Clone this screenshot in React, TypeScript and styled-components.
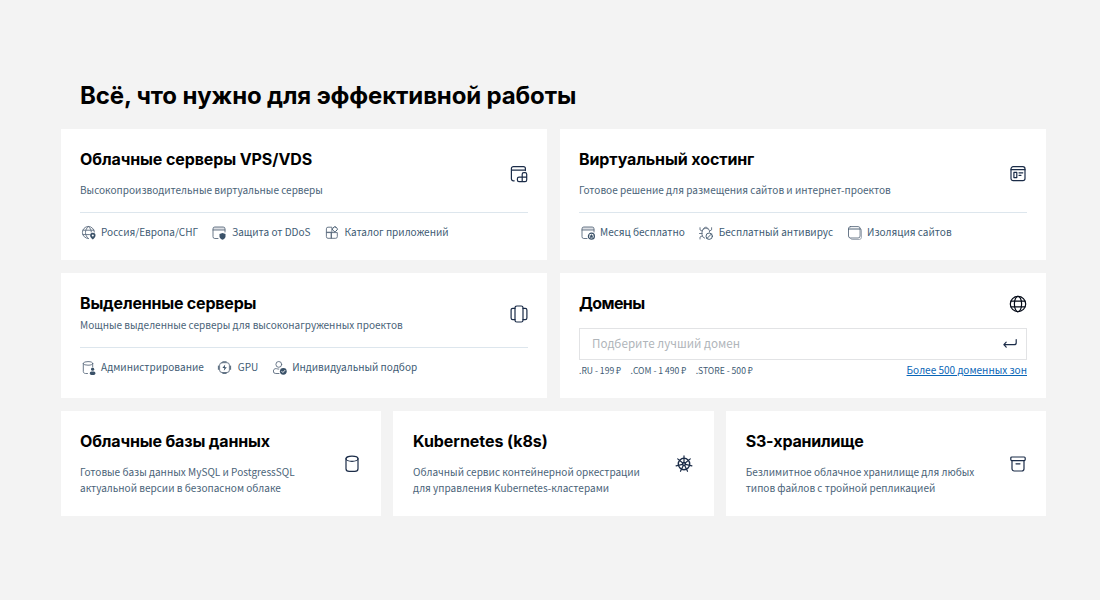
import React from 'react';
import styled, { createGlobalStyle } from 'styled-components';

const GlobalStyle = createGlobalStyle`
  * { box-sizing: border-box; }
  body { margin: 0; background: #f3f3f3; }
`;

const sans = '"Noto Sans CJK SC", "Noto Sans", sans-serif';

const Page = styled.main`
  width: 1100px;
  height: 600px;
  padding: 80px 54px 0 61px;
  background: #f3f3f3;
  font-family: ${sans};
`;
const PageTitle = styled.h2`
  margin: 0 0 17px 19px;
  font: 700 24px/32px Inter, sans-serif;
  letter-spacing: -0.14px;
  color: #000;
`;
const Grid = styled.div`
  display: flex;
  flex-direction: column;
  gap: 13px;
`;
const Row = styled.div<{ $cols: number; $height: number }>`
  display: grid;
  grid-template-columns: repeat(${p => p.$cols}, 1fr);
  gap: ${p => (p.$cols === 2 ? 13 : 12)}px;
  height: ${p => p.$height}px;
`;
const Card = styled.section<{ $inset?: number }>`
  padding: 19px 19px 0 ${p => p.$inset ?? 19}px;
  background: #fff;
`;
const Head = styled.div<{ $line?: boolean }>`
  display: flex;
  align-items: center;
  justify-content: space-between;
  padding-bottom: ${p => (p.$line ? 14 : 0)}px;
  border-bottom: ${p => (p.$line ? '1px solid #dde6ed' : 'none')};
`;
const CardTitle = styled.h3<{ $track?: number }>`
  margin: 0;
  padding-bottom: 2px;
  font: 700 16px/22px Inter, sans-serif;
  letter-spacing: ${p => p.$track ?? -0.1}px;
  color: #000;
`;
const Text = styled.p<{ $gap?: number }>`
  margin: ${p => p.$gap ?? 10}px 0 0;
  font-size: 10.04px;
  line-height: 16px;
  white-space: pre-line;
  color: #4a6378;
`;
const HeadIcon = styled.svg<{ $shift?: number; $top?: number; $color?: string }>`
  flex: none;
  width: 18px;
  height: 18px;
  margin: ${p => p.$top ?? 2}px ${p => p.$shift ?? 0}px 0 0;
  fill: none;
  stroke: ${p => p.$color ?? '#1b2c48'};
  stroke-width: 1.2;
  stroke-linecap: round;
  stroke-linejoin: round;
`;
const Features = styled.ul`
  display: flex;
  gap: 13.4px;
  margin: 11px 0 0 0.5px;
  padding: 0;
  list-style: none;
`;
const Feature = styled.li`
  display: flex;
  align-items: center;
  gap: 4.5px;
  height: 17px;
  font-size: 10.04px;
  line-height: 15px;
  color: #3d5a73;
`;
const FeatureLabel = styled.span`
  padding-bottom: 2px;
`;
const SmallIcon = styled.svg`
  width: 16px;
  height: 16px;
  fill: none;
  stroke: #5b6b7e;
  stroke-width: 0.9;
  stroke-linecap: round;
  stroke-linejoin: round;
  .solid { fill: #3a5168; stroke: none; }
  .dark { stroke: #3a5168; }
  .tint { fill: #dcdfe4; }
  .mark { stroke: #fff; }
`;
const Search = styled.div`
  display: flex;
  align-items: center;
  justify-content: space-between;
  height: 32px;
  margin-top: 12px;
  padding: 0 7px 0 12px;
  border: 1px solid #e2e3e5;
`;
const SearchInput = styled.input`
  flex: 1;
  padding: 0 0 2px;
  border: 0;
  outline: 0;
  background: none;
  font: 11.65px/20px ${sans};
  &::placeholder { color: #b0b5ba; opacity: 1; }
`;
const Below = styled.div`
  display: flex;
  align-items: center;
  justify-content: space-between;
  margin-top: 2px;
  line-height: 16px;
`;
const Prices = styled.div`
  display: flex;
  gap: 9.4px;
  font-size: 8.6px;
  color: #3d5a73;
`;
const ZonesLink = styled.a`
  font-size: 10.04px;
  color: #0a66b7;
  text-decoration: underline;
  text-underline-offset: 1px;
`;

const headIcons = {
  vps: <>
    <path d="M4.2 15.8H3.4a2 2 0 0 1-2-2V3.6a2 2 0 0 1 2-2h10a2 2 0 0 1 2 2v2M1.4 5.2h14" />
    <path d="M12.2 12.2V9.3a1.6 1.6 0 0 1 1.6-1.6h1.3a1.6 1.6 0 0 1 1.6 1.6v5.8a1.6 1.6 0 0 1-1.6 1.6H9a1.6 1.6 0 0 1-1.6-1.6v-1.3A1.6 1.6 0 0 1 9 12.2h7.7M12.2 12.2v4.5" />
  </>,
  hosting: <>
    <rect x="2" y="1.7" width="14" height="14" rx="2.2" />
    <path d="M2 4.7h14M4.9 7.4h2.9v5.2H4.9zM10 7.8h3.8M10 10.3h2" />
  </>,
  server: <>
    <rect x="5" y="1" width="8" height="16" rx="1.8" />
    <path d="M5 3.3H2.8A1.7 1.7 0 0 0 1.1 5v8a1.7 1.7 0 0 0 1.7 1.7H5M13 3.3h2.2A1.7 1.7 0 0 1 16.9 5v8a1.7 1.7 0 0 1-1.7 1.7H13" />
  </>,
  globe: <>
    <circle cx="9" cy="9" r="7.7" />
    <ellipse cx="9" cy="9" rx="3.6" ry="7.7" />
    <path d="M2 6.2h14M2 11.8h14" />
  </>,
  database: <>
    <ellipse cx="9" cy="3.7" rx="6" ry="2.6" />
    <path d="M3 3.7v10c0 1.6 1.5 2.7 3.2 2.7h5.6c1.7 0 3.2-1.1 3.2-2.7v-10" />
  </>,
  helm: <>
    <circle cx="9" cy="9" r="5.7" strokeWidth="1.4" />
    <circle cx="9" cy="9" r="1.5" strokeWidth="1.3" />
    <path d="M9 .9v6.4M9 9 9.1 9M2.7 3.9 7.8 8M15.3 3.9 10.2 8M1.1 10.8l6.3-1.4M16.9 10.8l-6.3-1.4M5.5 16.3l2.8-5.8M12.5 16.3l-2.8-5.8" />
  </>,
  archive: <>
    <rect x="1.8" y="2" width="14.4" height="3.6" rx="1" />
    <path d="M3 5.6v8.2A2.2 2.2 0 0 0 5.2 16h7.6a2.2 2.2 0 0 0 2.2-2.2V5.6M7 8.8h4" />
  </>,
};

const browser = <><path className="tint" stroke="none" d="M2 5V3.8A1.8 1.8 0 0 1 3.8 2h8.4A1.8 1.8 0 0 1 14 3.8V5z" /><path d="M7 13.5H3.8A1.8 1.8 0 0 1 2 11.7V3.8A1.8 1.8 0 0 1 3.8 2h8.4A1.8 1.8 0 0 1 14 3.8V7M2 5h12" /></>;

const smallIcons = {
  location: <>
    <path d="M7.4 13.5A6 6 0 1 1 13.4 7M7.4 1.5c-4 3-4 9 0 12M7.4 1.5c2 1.5 2.8 3.5 2.9 5.5M1.9 5.2h11M1.9 9.6h6.6" />
    <path className="solid" d="M11.8 7.7a2.7 2.7 0 0 0-2.7 2.8c0 1.7 1.6 3.2 2.7 4.1 1.1-.9 2.7-2.4 2.7-4.1a2.7 2.7 0 0 0-2.7-2.8z" />
    <circle cx="11.8" cy="10.5" r="1" fill="#fff" stroke="none" />
  </>,
  shield: <>{browser}<path className="solid" d="M11.5 8.1l3 1v2.3c0 1.5-1.5 2.6-3 3.3-1.5-.7-3-1.8-3-3.3V9.1z" /></>,
  catalog: <>
    <path d="M7.5 2.2H4A1.6 1.6 0 0 0 2.4 3.8v3.8h5.1zM2.4 7.6v4.1A1.6 1.6 0 0 0 4 13.3h3.5V7.6zM7.5 7.6h5.8v4.1a1.6 1.6 0 0 1-1.6 1.6H7.5z" />
    <rect className="dark" x="8.8" y="2.1" width="4.2" height="4.2" rx="1.2" transform="rotate(45 10.9 4.2)" />
  </>,
  month: <>{browser}<circle className="dark" cx="11.4" cy="11.2" r="3" strokeWidth="1.2" /><path className="solid" d="M11.4 9.1l.7 1.4 1.5.2-1.1 1 .3 1.5-1.4-.7-1.4.7.3-1.5-1.1-1 1.5-.2z" /></>,
  virus: <>
    <path d="M6.7 13.2A3.8 3.8 0 0 1 4 9.5V7a3.8 3.8 0 0 1 7.6 0M5.5 4.1C5.4 1.5 10.2 1.5 10.1 4.1M4 6 2 4.9V2.7M4 8.5H1.5M4.2 10.9 2 12v2M11.6 6l2-1.1V2.7" />
    <circle className="dark" cx="11.2" cy="11.2" r="3.2" /><path className="dark" d="m9 13.4 4.4-4.4" />
  </>,
  isolate: <>
    <path opacity=".6" d="M13.3 3.6c.8.2 1.2.8 1.2 1.6v7a2.3 2.3 0 0 1-2.3 2.3h-7c-.8 0-1.4-.4-1.6-1.2" />
    <rect x="1.5" y="1.6" width="11.6" height="11.4" rx="2" /><path className="dark" d="M1.5 4h11.6" />
  </>,
  admin: <>
    <ellipse cx="7" cy="3.4" rx="4.7" ry="1.8" />
    <path d="M2.3 3.4v8.3c0 1 1 1.7 2.2 1.8h2M11.7 3.4v3.2" />
    <circle className="solid" cx="11.6" cy="9.2" r="1.6" /><rect className="solid" x="8.8" y="11.5" width="5.6" height="3.4" rx="1.6" />
  </>,
  gpu: <>
    <rect x="2.6" y="2.7" width="9.8" height="9.8" rx="2.4" />
    <path className="dark" d="M5.8 1.8h3.4M5.8 13.4h3.4M1.4 6v3.4M13.6 6v3.4" />
    <path className="solid" d="M8.2 4.6 5.4 8h2L6.8 10.8l3-3.6h-2z" />
  </>,
  person: <>
    <circle cx="6.8" cy="4.4" r="2.9" /><path d="M7 13.5H3.8A2.3 2.3 0 0 1 1.4 11c0-1.4 1.1-2.4 2.5-2.4.9 0 1.6.5 2.9.5" />
    <circle className="solid" cx="11.3" cy="11.3" r="3.4" /><path className="mark" d="m9.8 11.4 1.1 1.1 2-2.1" />
  </>,
};

type HeadName = keyof typeof headIcons;
type SmallName = keyof typeof smallIcons;

interface ProductProps {
  title: string;
  text: string;
  icon: HeadName;
  track?: number;
  gap?: number;
  shift?: number;
  inset?: number;
  features?: [SmallName, string][];
}

function Product({ title, text, icon, track, gap, shift, inset, features }: ProductProps) {
  return (
    <Card $inset={inset}>
      <Head $line={!!features}>
        <div>
          <CardTitle $track={track}>{title}</CardTitle>
          <Text $gap={gap}>{text}</Text>
        </div>
        <HeadIcon viewBox="0 0 18 18" $shift={shift}>{headIcons[icon]}</HeadIcon>
      </Head>
      {features && (
        <Features>
          {features.map(([name, label]) => (
            <Feature key={name}>
              <SmallIcon viewBox="0 0 16 16">{smallIcons[name]}</SmallIcon>
              <FeatureLabel>{label}</FeatureLabel>
            </Feature>
          ))}
        </Features>
      )}
    </Card>
  );
}

function Domains() {
  return (
    <Card>
      <Head>
        <CardTitle $track={-0.6}>Домены</CardTitle>
        <HeadIcon viewBox="0 0 18 18" $top={0} $shift={0.5} $color="#050b18">{headIcons.globe}</HeadIcon>
      </Head>
      <Search>
        <SearchInput placeholder="Подберите лучший домен" />
        <HeadIcon viewBox="0 0 18 18" $top={0}>
          <path d="M15.2 4.5v3.2a2 2 0 0 1-2 2H2.9M5.2 7.2 2.9 9.7l2.3 2.5" />
        </HeadIcon>
      </Search>
      <Below>
        <Prices>
          <span>.RU - 199 ₽</span>
          <span>.COM - 1 490 ₽</span>
          <span>.STORE - 500 ₽</span>
        </Prices>
        <ZonesLink href="#">Более 500 доменных зон</ZonesLink>
      </Below>
    </Card>
  );
}

export default function App() {
  return (
    <Page>
      <GlobalStyle />
      <PageTitle>Всё, что нужно для эффективной работы</PageTitle>
      <Grid>
        <Row $cols={2} $height={131}>
          <Product
            title="Облачные серверы VPS/VDS"
            text="Высокопроизводительные виртуальные серверы"
            icon="vps"
            features={[['location', 'Россия/Европа/СНГ'], ['shield', 'Защита от DDoS'], ['catalog', 'Каталог приложений']]}
          />
          <Product
            title="Виртуальный хостинг"
            text="Готовое решение для размещения сайтов и интернет-проектов"
            icon="hosting"
            shift={0.5}
            features={[['month', 'Месяц бесплатно'], ['virus', 'Бесплатный антивирус'], ['isolate', 'Изоляция сайтов']]}
          />
        </Row>
        <Row $cols={2} $height={125}>
          <Product
            title="Выделенные серверы"
            text="Мощные выделенные серверы для высоконагруженных проектов"
            icon="server"
            track={-0.2}
            gap={1}
            shift={0.5}
            features={[['admin', 'Администрирование'], ['gpu', 'GPU'], ['person', 'Индивидуальный подбор']]}
          />
          <Domains />
        </Row>
        <Row $cols={3} $height={105}>
          <Product
            title="Облачные базы данных"
            text={'Готовые базы данных MySQL и PostgressSQL\nактуальной версии в безопасном облаке'}
            icon="database"
            track={-0.15}
            shift={1.5}
          />
          <Product
            title="Kubernetes (k8s)"
            text={'Облачный сервис контейнерной оркестрации\nдля управления Kubernetes-кластерами'}
            icon="helm"
            track={-0.06}
            shift={1.5}
            inset={19.7}
          />
          <Product
            title="S3-хранилище"
            text={'Безлимитное облачное хранилище для любых\nтипов файлов с тройной репликацией'}
            icon="archive"
            track={-0.2}
            shift={0.5}
            inset={20}
          />
        </Row>
      </Grid>
    </Page>
  );
}
